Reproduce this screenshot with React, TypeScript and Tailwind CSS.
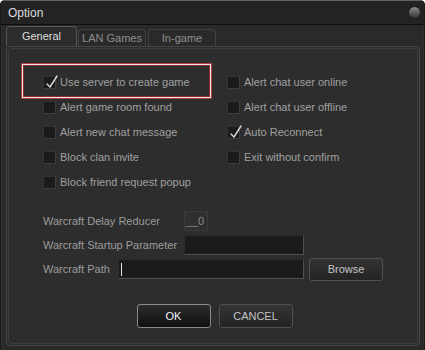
import React from "react";

const font = { fontFamily: '"Liberation Sans", Arial, sans-serif' };

function Check({ checked }: { checked?: boolean }) {
  return (
    <div className="relative w-[13px] h-[13px] shrink-0 bg-[#1b1b1b] border border-[#333] border-b-[#3e3e3e] border-r-[#3e3e3e] rounded-[1px]">
      {checked && (
        <svg className="absolute left-[1px] top-[-3px]" width="14" height="15" viewBox="0 0 14 15">
          <path d="M2 10 L5 13 L12 2" fill="none" stroke="#d8d8d8" strokeWidth="1.4" strokeLinecap="round" strokeLinejoin="round" />
        </svg>
      )}
    </div>
  );
}

function Item({ label, checked }: { label: string; checked?: boolean }) {
  return (
    <div className="flex items-center h-[25px] gap-[4px]">
      <Check checked={checked} />
      <span className="text-[11px] text-[#a0a0a0] leading-none">{label}</span>
    </div>
  );
}

function Btn({ children, primary, w }: { children: React.ReactNode; primary?: boolean; w: string }) {
  return (
    <div
      className={
        "flex items-center justify-center rounded-[3px] text-[11px] leading-none border " +
        w +
        (primary
          ? " border-[#8a8a8a] bg-gradient-to-b from-[#2c2c2c] to-[#111] text-[#f2f2f2]"
          : " border-[#505050] bg-gradient-to-b from-[#343434] to-[#232323] text-[#c4c4c4]")
      }
    >
      {children}
    </div>
  );
}

export default function App() {
  return (
    <div style={font} className="w-[425px] h-[350px] flex flex-col bg-[#161616] rounded-t-[5px] overflow-hidden">
      <div className="flex-1 flex flex-col rounded-t-[5px] border-t border-[#646464] border-x border-x-[#1a1a1a] bg-[#262626]">
        {/* title bar */}
        <div className="h-[24px] flex items-center justify-between pl-[7px] pr-[4px] bg-[#232323] border-b border-[#0e0e0e]">
          <span className="text-[12px] text-[#dcdcdc] leading-none">Option</span>
          <div className="w-[11px] h-[11px] rounded-full bg-gradient-to-b from-[#8d8d8d] to-[#333] shadow-[0_0_1px_#000]" />
        </div>
        {/* body */}
        <div className="flex-1 flex flex-col pl-[4px] pr-[3px] pb-[4px] bg-[#2a2a2a] border-x border-[#2f2f2f]">
          {/* tabs */}
          <div className="h-[20px] flex items-end mt-[1px]">
            <div className="w-[71px] h-[20px] flex items-center justify-center rounded-t-[4px] border border-b-0 border-[#575757] bg-[#2d2d2d] text-[11px] text-[#dedede] leading-none">
              General
            </div>
            <div className="ml-[1px] w-[68px] h-[17px] flex items-center justify-center rounded-t-[4px] border border-b-0 border-[#424242] bg-[#2a2a2a] text-[11px] text-[#8e8e8e] leading-none">
              LAN Games
            </div>
            <div className="ml-[2px] w-[68px] h-[17px] flex items-center justify-center rounded-t-[4px] border border-b-0 border-[#424242] bg-[#2a2a2a] text-[11px] text-[#8e8e8e] leading-none">
              In-game
            </div>
          </div>
          {/* tab frame */}
          <div className="flex-1 flex flex-col border border-[#474747] rounded-[4px] p-[1px] bg-[#2b2b2b]">
            <div className="flex-1 flex flex-col border border-[#3e3e3e] rounded-[4px] bg-[#2d2d2d] pl-[34px] pt-[21px]">
              <div className="grid grid-cols-[184px_1fr]">
                <div className="relative">
                  <div className="absolute left-[-22px] top-[-7px] w-[191px] h-[36px] border border-[#b13f48]">
                    <div className="w-full h-full border border-[#efe2e2]">
                      <div className="w-full h-full border border-[#8e2f35]" />
                    </div>
                  </div>
                  <div className="relative">
                    <Item label="Use server to create game" checked />
                  </div>
                </div>
                <Item label="Alert chat user online" />
                <Item label="Alert game room found" />
                <Item label="Alert chat user offline" />
                <Item label="Alert new chat message" />
                <Item label="Auto Reconnect" checked />
                <Item label="Block clan invite" />
                <Item label="Exit without confirm" />
                <Item label="Block friend request popup" />
              </div>

              <div className="mt-[16px] flex flex-col gap-[4px] text-[11px] text-[#9c9c9c] leading-none">
                <div className="flex items-center h-[20px]">
                  <span className="w-[141px]">Warcraft Delay Reducer</span>
                  <div className="w-[24px] h-[20px] flex items-center justify-end pr-[3px] bg-[#2f2f2f] border border-[#3a3a3a] text-[#8a8a8a]">
                    __0
                  </div>
                </div>
                <div className="flex items-center h-[20px]">
                  <span className="w-[141px]">Warcraft Startup Parameter</span>
                  <div className="w-[120px] h-[20px] bg-[#1b1b1b] border border-[#2a2a2a] border-b-[#505050] border-r-[#505050]" />
                </div>
                <div className="flex items-center h-[20px]">
                  <span className="w-[75px]">Warcraft Path</span>
                  <div className="w-[186px] h-[20px] flex items-center pl-[2px] bg-[#1b1b1b] border border-[#2a2a2a] border-b-[#505050] border-r-[#505050]">
                    <div className="w-[1px] h-[13px] bg-[#e8e8e8]" />
                  </div>
                  <div className="ml-[5px] h-[23px] flex">
                    <Btn w="w-[74px]">Browse</Btn>
                  </div>
                </div>
              </div>

              <div className="mt-[25px] -ml-[34px] flex justify-center gap-[8px] h-[24px] pl-[3px]">
                <Btn primary w="w-[74px]">OK</Btn>
                <Btn w="w-[74px]">CANCEL</Btn>
              </div>
            </div>
          </div>
        </div>
      </div>
    </div>
  );
}
